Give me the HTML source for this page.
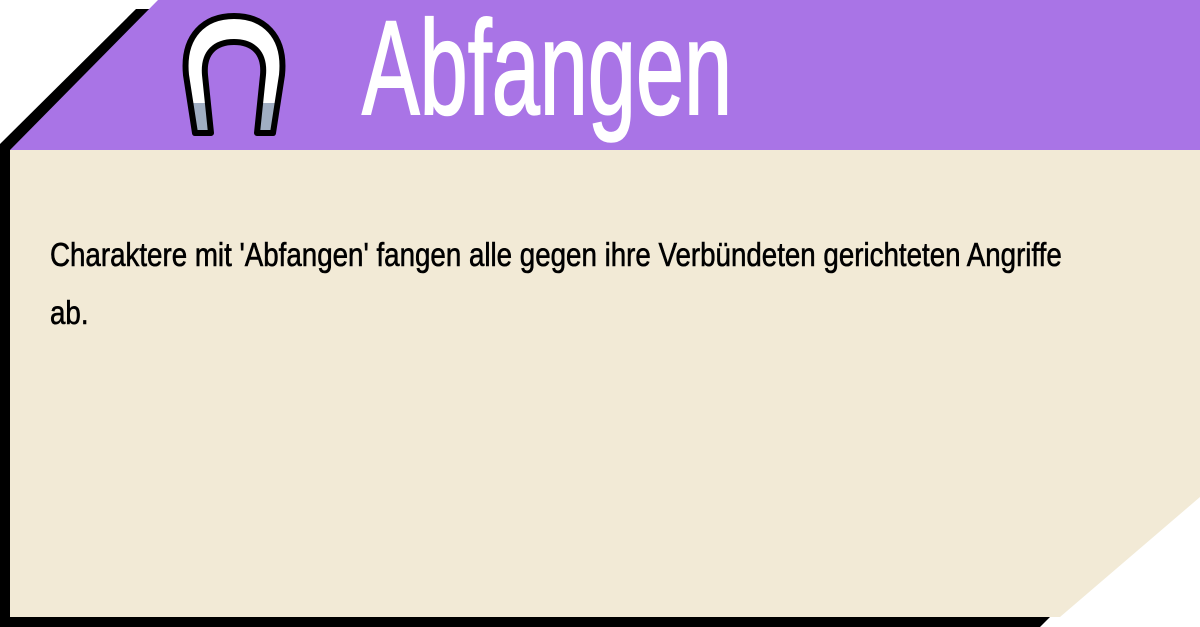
<!DOCTYPE html>
<html><head><meta charset="utf-8"><style>
html,body{margin:0;padding:0;width:1200px;height:627px;overflow:hidden;background:#fff;position:relative;font-family:"Liberation Sans",sans-serif}
svg.bg{position:absolute;left:0;top:0}
.t{position:absolute;white-space:nowrap;transform-origin:0 0}
</style></head><body>
<svg class="bg" width="1200" height="627">
<polygon points="136,9 1060,9 1050,617 1040,627 0,627 0,144" fill="#000"/>
<polygon points="10,150 1200,150 1200,497 1060,617 10,617" fill="#f2ead6"/>
<polygon points="158,0 1200,0 1200,150 10,150" fill="#a974e6"/>
<defs><clipPath id="c"><path d="M195,133 L186,75 C182,35 205,16 234,16 C263,16 286,35 282,75 L273,133 L257,133 L263,75 C265,52 252,42 234,42 C216,42 203,52 205,75 L211,133 Z"/></clipPath></defs>
<g clip-path="url(#c)"><rect x="170" y="0" width="130" height="140" fill="#fff"/><rect x="170" y="103" width="130" height="40" fill="#a0aec2"/></g>
<path d="M195,133 L186,75 C182,35 205,16 234,16 C263,16 286,35 282,75 L273,133 L257,133 L263,75 C265,52 252,42 234,42 C216,42 203,52 205,75 L211,133 Z" fill="none" stroke="#000" stroke-width="6" stroke-linejoin="round"/>
</svg>
<div class="t" style="left:362px;top:2px;font-size:134px;line-height:134px;color:#fff;-webkit-text-stroke:2px #fff;transform:scaleX(0.645)">Abfangen</div>
<div class="t" style="left:50px;top:236px;font-size:33px;line-height:38px;color:#000;-webkit-text-stroke:0.6px #000;transform:scaleX(0.84)">Charaktere mit 'Abfangen' fangen alle gegen ihre Verbündeten gerichteten Angriffe</div>
<div class="t" style="left:50px;top:294px;font-size:33px;line-height:38px;color:#000;-webkit-text-stroke:0.6px #000;transform:scaleX(0.84)">ab.</div>
</body></html>
